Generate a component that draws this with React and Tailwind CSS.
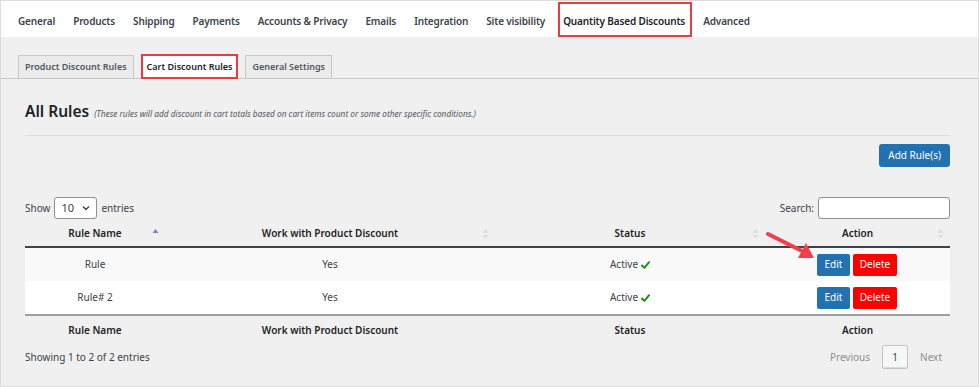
import React from 'react';

const navItems = [
    'General',
    'Products',
    'Shipping',
    'Payments',
    'Accounts & Privacy',
    'Emails',
    'Integration',
    'Site visibility',
    'Quantity Based Discounts',
    'Advanced',
];

const rows = [
    { name: 'Rule', product: 'Yes', status: 'Active', bg: 'bg-[#f9f9f9]' },
    { name: 'Rule# 2', product: 'Yes', status: 'Active', bg: 'bg-white' },
];

// Small double triangle sort indicator
const SortIcon = ({ active }) => (
    <svg width="7" height="12" viewBox="0 0 7 12" className="absolute right-[6px] top-1/2 -translate-y-1/2">
        {active ? (
            <path d="M0.5 5 L3.5 1 L6.5 5 Z" fill="#7b7fd8" />
        ) : (
            <>
                <path d="M0.5 5 L3.5 1 L6.5 5 Z" fill="#dcdcdc" />
                <path d="M0.5 7 L3.5 11 L6.5 7 Z" fill="#dcdcdc" />
            </>
        )}
    </svg>
);

const Check = () => (
    <svg width="9" height="8" viewBox="0 0 10 9" className="inline-block ml-[3px] -mt-[2px]">
        <path d="M1 5 L3.8 7.6 L9 1.4" stroke="#1a8f1a" strokeWidth="2.2" fill="none" strokeLinecap="round" strokeLinejoin="round" />
    </svg>
);

const App = () => {
    return (
        <div
            className="relative w-[979px] h-[387px] bg-[#f0f0f0] border border-[#dcdcdc] overflow-hidden text-[#3c434a]"
            style={{ fontFamily: '"Noto Sans", "Open Sans", sans-serif' }}
        >
            {/* Top settings nav */}
            <div className="h-[36px] bg-white flex items-stretch pl-[17px] gap-[18px] text-[10px] font-semibold tracking-[-0.15px]">
                {navItems.map((item) => (
                    <div
                        key={item}
                        className={
                            item === 'Quantity Based Discounts'
                                ? 'flex items-center pt-[3px] pl-[3px] pr-[5px] -ml-[5px] -mr-[7px] border-2 border-[#ea3a42] text-[#1d2327] mt-[1px]'
                                : 'flex items-center pt-[5px]'
                        }
                    >
                        {item}
                    </div>
                ))}
            </div>

            {/* Sub tabs */}
            <div className="mt-[19px] h-[23px] flex items-end pl-[17px] gap-[7px] border-b border-[#c8c8c8] text-[9px] font-semibold">
                <div className="h-[23px] px-[6px] flex items-center border border-b-0 border-[#c8c8c8] bg-[#ebebeb] text-[#50575e]">
                    Product Discount Rules
                </div>
                <div className="h-[25px] px-[4px] flex items-center border-2 border-[#ea3a42] bg-white text-[#1d2327] -mb-[1px]">
                    Cart Discount Rules
                </div>
                <div className="h-[23px] px-[6px] flex items-center border border-b-0 border-[#c8c8c8] bg-[#ebebeb] text-[#50575e]">
                    General Settings
                </div>
            </div>

            {/* Content */}
            <div className="pl-[24px] pr-[28px]">
                <div className="mt-[21px] flex items-baseline gap-[5px] pb-[12px] border-b border-[#dddddd]">
                    <span className="text-[15.5px] font-semibold text-[#1d2327]">All Rules</span>
                    <span className="text-[8.3px] italic text-[#50575e]">
                        (These rules will add discount in cart totals based on cart items count or some other specific conditions.)
                    </span>
                </div>

                <div className="flex justify-end mt-[8px]">
                    <button className="h-[23px] px-[9px] bg-[#2271b1] rounded-[3px] text-white text-[10px]">
                        Add Rule(s)
                    </button>
                </div>

                {/* Show / Search */}
                <div className="mt-[30px] flex items-center justify-between text-[10px]">
                    <div className="flex items-center gap-[4px]">
                        <span>Show</span>
                        <div className="w-[43px] h-[22px] border border-[#8c8f94] rounded-[3px] bg-white flex items-center justify-between pl-[6px] pr-[6px] text-[11px]">
                            <span>10</span>
                            <svg width="8" height="6" viewBox="0 0 8 6">
                                <path d="M1 1.5 L4 4.5 L7 1.5" stroke="#3c434a" strokeWidth="1.4" fill="none" />
                            </svg>
                        </div>
                        <span>entries</span>
                    </div>
                    <div className="flex items-center gap-[4px]">
                        <span>Search:</span>
                        <div className="w-[132px] h-[22px] border border-[#8c8f94] rounded-[3px] bg-white" />
                    </div>
                </div>

                {/* Table */}
                <table className="w-full border-collapse text-[10px] mt-[2px] table-fixed">
                    <thead>
                        <tr className="h-[26px] border-b-2 border-[#3c434a] text-[#1d2327]">
                            <th className="relative w-[140px] font-semibold">
                                Rule Name
                                <SortIcon active />
                            </th>
                            <th className="relative w-[330px] font-semibold">
                                Work with Product Discount
                                <SortIcon />
                            </th>
                            <th className="relative w-[270px] font-semibold">
                                Status
                                <SortIcon />
                            </th>
                            <th className="relative font-semibold">
                                Action
                                <SortIcon />
                            </th>
                        </tr>
                    </thead>
                    <tbody>
                        {rows.map((row) => (
                            <tr key={row.name} className={`h-[34px] ${row.bg}`}>
                                <td className="text-center">{row.name}</td>
                                <td className="text-center">{row.product}</td>
                                <td className="text-center">
                                    {row.status}
                                    <Check />
                                </td>
                                <td>
                                    <div className="flex justify-center gap-[3px] pr-[1px]">
                                        <button className="h-[22px] w-[33px] bg-[#2271b1] text-white rounded-[2px] text-[10px]">
                                            Edit
                                        </button>
                                        <button className="h-[22px] w-[44px] bg-[#ff0000] text-white rounded-[2px] text-[10px]">
                                            Delete
                                        </button>
                                    </div>
                                </td>
                            </tr>
                        ))}
                    </tbody>
                    <tfoot>
                        <tr className="h-[25px] border-t-2 border-[#a0a0a0] text-[#1d2327]">
                            <th className="font-semibold pt-[5px]">Rule Name</th>
                            <th className="font-semibold pt-[5px]">Work with Product Discount</th>
                            <th className="font-semibold pt-[5px]">Status</th>
                            <th className="font-semibold pt-[5px]">Action</th>
                        </tr>
                    </tfoot>
                </table>

                {/* Info / pagination */}
                <div className="mt-[5px] flex items-center justify-between text-[10px]">
                    <span>Showing 1 to 2 of 2 entries</span>
                    <div className="flex items-center text-[#8c8f94]">
                        <span className="mr-[12px]">Previous</span>
                        <div className="w-[26px] h-[24px] border border-[#c3c4c7] bg-[#f6f7f7] rounded-[2px] flex items-center justify-center text-[#3c434a] shadow-[inset_0_-1px_0_#dcdcde]">
                            1
                        </div>
                        <span className="ml-[12px] mr-[8px]">Next</span>
                    </div>
                </div>
            </div>

            {/* Annotation arrow */}
            <svg width="979" height="387" className="absolute inset-0 pointer-events-none">
                <line x1="767" y1="233" x2="803" y2="251" stroke="#f0404a" strokeWidth="4" strokeLinecap="round" />
                <path d="M813 257 L797 257 L805 242 Z" fill="#f0404a" />
            </svg>
        </div>
    );
};

export default App;
